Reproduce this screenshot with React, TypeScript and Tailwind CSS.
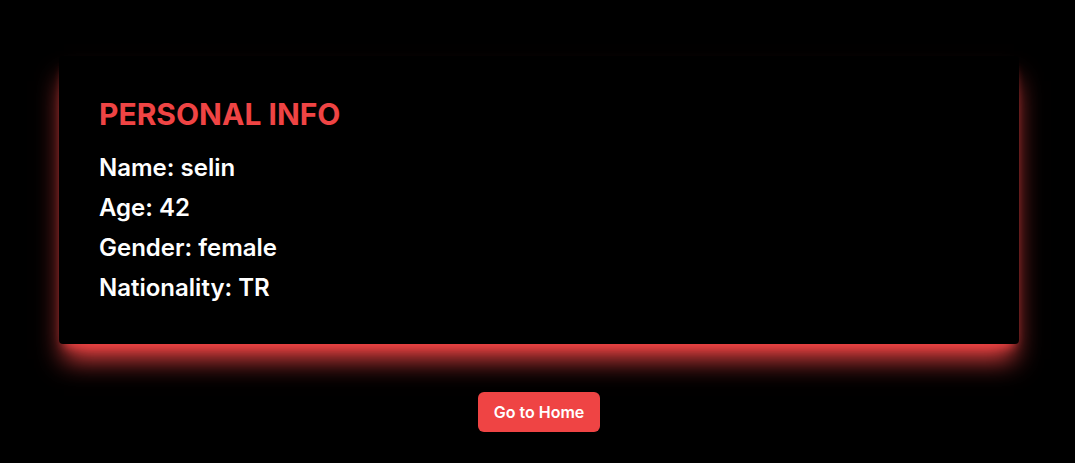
export default function App() {
  return (
    <div className="min-h-screen bg-black font-['Inter',sans-serif] pt-[56px] pl-[3px]">
      <div className="w-[960px] mx-auto bg-black rounded p-10 shadow-xl shadow-[#ef4444]">
        <h2 className="text-3xl font-bold text-[#ef4444] mb-5">PERSONAL INFO</h2>
        <div className="space-y-2 text-2xl font-semibold text-white">
          <p>Name: selin</p>
          <p>Age: 42</p>
          <p>Gender: female</p>
          <p>Nationality: TR</p>
        </div>
      </div>
      <div className="flex justify-center mt-12">
        <button className="bg-[#ef4444] text-white text-base font-semibold px-4 py-2 rounded-md">
          Go to Home
        </button>
      </div>
    </div>
  );
}
